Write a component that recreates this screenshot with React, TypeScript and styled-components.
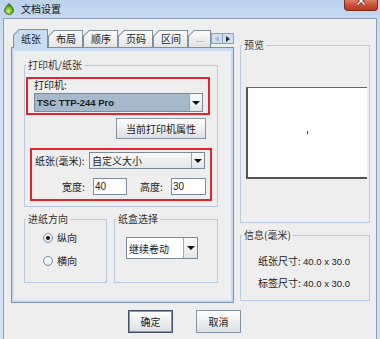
import styled, { createGlobalStyle } from 'styled-components'

const GlobalStyle = createGlobalStyle`
  html, body {
    margin: 0;
    padding: 0;
  }
  body {
    width: 380px;
    height: 339px;
    overflow: hidden;
    font-family: "Liberation Sans", "Noto Sans CJK SC", sans-serif;
    font-size: 10px;
    color: #1e1e1e;
    background: #eeeeee;
  }
  * {
    box-sizing: border-box;
  }
`

const cjk = `"Noto Sans CJK SC", "Liberation Sans", sans-serif`

const Window = styled.div`
  width: 380px;
  height: 339px;
  display: flex;
  flex-direction: column;
  overflow: hidden;
  background: linear-gradient(180deg, #bcd3ec 0%, #cfe0f2 12%, #d3e2f3 100%);
`

const TitleBar = styled.div`
  flex: none;
  height: 18px;
  display: flex;
  align-items: flex-start;
`

const AppIcon = styled.svg`
  flex: none;
  margin: 3px 0 0 4px;
`

const TitleText = styled.span`
  margin: 3px 0 0 7px;
  font-family: ${cjk};
  font-size: 10px;
  line-height: 11px;
  color: #111;
`

const CloseButton = styled.div`
  margin-left: auto;
  margin-right: 2px;
  width: 34px;
  height: 11px;
  border: 1px solid #7d2a1f;
  border-top: none;
  border-radius: 0 0 4px 4px;
  background: linear-gradient(180deg, #dc7f68 0%, #c94d35 55%, #b63c25 100%);
  display: flex;
  justify-content: center;
  overflow: hidden;

  svg {
    margin-top: -4px;
  }
`

const Client = styled.div`
  flex: 1;
  margin: 0 3px;
  border: 1px solid #8d9cb0;
  border-bottom: none;
  background: #eeeeee;
  display: flex;
  flex-direction: column;
`

const MainRow = styled.div`
  display: flex;
  align-items: flex-start;
  padding-left: 7px;
`

const TabPane = styled.div`
  width: 223px;
  margin-top: 10px;
  display: flex;
  flex-direction: column;
`

const TabStrip = styled.div`
  position: relative;
  z-index: 1;
  height: 19px;
  margin-bottom: -1px;
  padding-left: 2px;
  display: flex;
  align-items: flex-end;
`

const Tab = styled.div<{ $selected?: boolean }>`
  flex: none;
  height: ${p => (p.$selected ? 19 : 18)}px;
  padding: 1px 1px ${p => (p.$selected ? 0 : 1)}px 1px;
  background: #7d8fa4;
  clip-path: polygon(6px 0, 100% 0, 100% 100%, 0 100%, 0 6px);
`

const TabFace = styled.div<{ $selected?: boolean; $muted?: boolean }>`
  height: 100%;
  padding: 0 6px 0 7px;
  display: flex;
  align-items: center;
  font-family: ${p => (p.$muted ? `"Liberation Sans", sans-serif` : cjk)};
  font-size: 10px;
  line-height: 1;
  color: ${p => (p.$muted ? '#8a8a8a' : '#1a1a1a')};
  background: ${p =>
    p.$selected ? '#c8ddf2' : 'linear-gradient(180deg, #fdfdfd 0%, #e3e3e3 100%)'};
  clip-path: polygon(5.4px 0, 100% 0, 100% 100%, 0 100%, 0 5.4px);
`

const ScrollArrows = styled.div`
  margin-left: auto;
  margin-bottom: 4px;
  display: flex;
`

const ArrowButton = styled.div`
  width: 12px;
  height: 11px;
  margin-left: -1px;
  border: 1px solid #8ea3ba;
  background: #cde0f3;
  display: flex;
  align-items: center;
  justify-content: center;
`

const LeftTriangle = styled.span`
  width: 0;
  height: 0;
  border-top: 3px solid transparent;
  border-bottom: 3px solid transparent;
  border-right: 4px solid #a9bbcf;
`

const RightTriangle = styled.span`
  width: 0;
  height: 0;
  border-top: 3px solid transparent;
  border-bottom: 3px solid transparent;
  border-left: 4px solid #2a2a2a;
`

const TabPanel = styled.div`
  height: 256px;
  border: 1px solid #7d8fa4;
  background: #c8ddf2;
  padding: 3px 2px 2px 2px;
`

const TabContent = styled.div`
  height: 100%;
  background: #eeeeee;
  padding: 8px 13px 0 10px;
  display: flex;
  flex-direction: column;
`

const Group = styled.fieldset<{ $width: number; $height: number }>`
  margin: 0;
  padding: 0;
  min-width: 0;
  flex: none;
  width: ${p => p.$width}px;
  height: ${p => p.$height}px;
  border: 1px solid #b8cbe0;
`

const Legend = styled.legend`
  margin-left: 1px;
  padding: 0 2px;
  font-family: ${cjk};
  font-size: 10px;
  line-height: 12px;
  color: #333;
`

const Highlight = styled.div<{ $width: number; $height: number }>`
  width: ${p => p.$width}px;
  height: ${p => p.$height}px;
  border: 2px solid #e3262e;
`

const PrinterBox = styled(Highlight)`
  margin: 6px 0 0 1px;
  padding-left: 6px;
`

const PaperBox = styled(Highlight)`
  margin: 9px 0 0 5px;
  padding: 2px 0 0 3px;
`

const FieldLabel = styled.div<{ $width?: number }>`
  flex: none;
  width: ${p => (p.$width ? `${p.$width}px` : 'auto')};
  font-family: ${cjk};
  font-size: 10px;
  line-height: 12px;
  color: #222;
  white-space: nowrap;
`

const Combo = styled.div<{ $tone: 'selected' | 'plain' | 'white'; $width: number; $height: number }>`
  flex: none;
  width: ${p => p.$width}px;
  height: ${p => p.$height}px;
  border: 1px solid #7a8a99;
  display: flex;
  background: ${p =>
    p.$tone === 'selected'
      ? '#a6b8cb'
      : p.$tone === 'plain'
        ? 'linear-gradient(180deg, #fafafa 0%, #e4e6e8 100%)'
        : '#ffffff'};
`

const PrinterCombo = styled(Combo)`
  margin-top: 2px;
`

const TrayCombo = styled(Combo)`
  margin: 12px 0 0 11px;
`

const ComboText = styled.span<{ $latin?: boolean }>`
  flex: 1;
  padding-left: 2px;
  display: flex;
  align-items: center;
  overflow: hidden;
  white-space: nowrap;
  font-family: ${p => (p.$latin ? `"Liberation Sans", sans-serif` : cjk)};
  font-size: ${p => (p.$latin ? 9.5 : 10)}px;
  font-weight: ${p => (p.$latin ? 700 : 400)};
  color: #1a1a1a;
`

const ComboArrow = styled.span<{ $width: number }>`
  flex: none;
  width: ${p => p.$width}px;
  border-left: 1px solid #9aa9b8;
  background: linear-gradient(180deg, #fbfbfb 0%, #e2e5e8 100%);
  display: flex;
  align-items: center;
  justify-content: center;
`

const DownTriangle = styled.span`
  width: 0;
  height: 0;
  border-left: 4px solid transparent;
  border-right: 4px solid transparent;
  border-top: 4px solid #111;
`

const PushButton = styled.button<{ $width: number; $height: number; $default?: boolean }>`
  flex: none;
  display: block;
  width: ${p => p.$width}px;
  height: ${p => p.$height}px;
  padding: 0;
  border: 1px solid ${p => (p.$default ? '#3e5167' : '#8595a7')};
  box-shadow: ${p => (p.$default ? 'inset 0 0 0 1px #8497ab' : 'none')};
  background: linear-gradient(180deg, #ffffff 0%, #eff0f2 45%, #dcdfe3 100%);
  font-family: ${cjk};
  font-size: 10px;
  color: #1a1a1a;
`

const PropertiesButton = styled(PushButton)`
  margin: 3px 11px 0 auto;
`

const PaperRow = styled.div`
  display: flex;
  align-items: center;
`

const SizeRow = styled.div`
  display: flex;
  align-items: center;
  margin-top: 9px;
  padding-left: 27px;
`

const SizeInput = styled.input<{ $width: number }>`
  flex: none;
  width: ${p => p.$width}px;
  height: 17px;
  margin: 0;
  padding: 0 1px;
  border: 1px solid #7f8e9e;
  background: #ffffff;
  font-family: "Liberation Sans", sans-serif;
  font-size: 10px;
  color: #1a1a1a;
  outline: none;
`

const SecondLabel = styled(FieldLabel)`
  margin-left: 13px;
`

const LowerRow = styled.div`
  display: flex;
  gap: 7px;
  margin-top: 6px;
`

const RadioRow = styled.div`
  display: flex;
  align-items: center;
  height: 14px;
  padding-left: 18px;
  margin-top: 6px;

  & + & {
    margin-top: 9px;
  }
`

const RadioDot = styled.span<{ $checked?: boolean }>`
  flex: none;
  width: 10px;
  height: 10px;
  margin-right: 4px;
  border-radius: 50%;
  border: 1px solid #7a8a99;
  background: linear-gradient(180deg, #ffffff 0%, #dfe6ee 100%);
  display: flex;
  align-items: center;
  justify-content: center;

  &::after {
    content: '';
    display: ${p => (p.$checked ? 'block' : 'none')};
    width: 4px;
    height: 4px;
    border-radius: 50%;
    background: #111;
  }
`

const RightColumn = styled.div`
  width: 130px;
  margin: 20px 0 0 6px;
  display: flex;
  flex-direction: column;
`

const PreviewPaper = styled.div`
  width: 121px;
  height: 92px;
  margin: 36px 0 0 5px;
  background: #ffffff;
  border-top: 1px solid #666;
  border-left: 2px solid #555;
  border-bottom: 2px solid #555;
  display: flex;
  align-items: center;
  justify-content: center;
`

const CenterTick = styled.span`
  width: 1px;
  height: 3px;
  background: #444;
`

const InfoGroup = styled(Group)`
  margin-top: 6px;
`

const InfoRow = styled.div`
  display: flex;
  align-items: baseline;
  padding-left: 17px;
  margin-top: 14px;
  line-height: 12px;

  & + & {
    margin-top: 9px;
  }
`

const InfoValue = styled.span`
  font-family: "Liberation Sans", sans-serif;
  font-size: 9.5px;
  color: #222;
`

const ButtonRow = styled.div`
  display: flex;
  justify-content: center;
  gap: 23px;
  margin-top: 7px;
  padding-right: 11px;
`

const tabs = ['纸张', '布局', '顺序', '页码', '区间']

const App = () => {
  return (
    <>
      <GlobalStyle />
      <Window>
        <TitleBar>
          <AppIcon width="10" height="12" viewBox="0 0 10 12">
            <defs>
              <radialGradient id="drop" cx="0.45" cy="0.7" r="0.6">
                <stop offset="0" stopColor="#e6f58a" />
                <stop offset="0.5" stopColor="#7cc427" />
                <stop offset="1" stopColor="#2f8a16" />
              </radialGradient>
            </defs>
            <path
              d="M5 0.5 C7.5 3 9.5 5.5 9.5 7.5 A4.5 4 0 0 1 0.5 7.5 C0.5 5.5 2.5 3 5 0.5 Z"
              fill="url(#drop)"
              stroke="#2b6a12"
              strokeWidth="0.8"
            />
          </AppIcon>
          <TitleText>文档设置</TitleText>
          <CloseButton>
            <svg width="10" height="10" viewBox="0 0 10 10">
              <path d="M1.5 1.5 L8.5 8.5 M8.5 1.5 L1.5 8.5" stroke="#5a1a10" strokeWidth="3" />
              <path d="M1.5 1.5 L8.5 8.5 M8.5 1.5 L1.5 8.5" stroke="#ffffff" strokeWidth="1.6" />
            </svg>
          </CloseButton>
        </TitleBar>
        <Client>
          <MainRow>
            <TabPane>
              <TabStrip>
                {tabs.map((t, i) => (
                  <Tab key={t} $selected={i === 0}>
                    <TabFace $selected={i === 0}>{t}</TabFace>
                  </Tab>
                ))}
                <Tab>
                  <TabFace $muted>...</TabFace>
                </Tab>
                <ScrollArrows>
                  <ArrowButton>
                    <LeftTriangle />
                  </ArrowButton>
                  <ArrowButton>
                    <RightTriangle />
                  </ArrowButton>
                </ScrollArrows>
              </TabStrip>
              <TabPanel>
                <TabContent>
                  <Group $width={194} $height={148}>
                    <Legend>打印机/纸张</Legend>
                    <PrinterBox $width={184} $height={38}>
                      <FieldLabel>打印机:</FieldLabel>
                      <PrinterCombo $tone="selected" $width={169} $height={19}>
                        <ComboText $latin>TSC TTP-244 Pro</ComboText>
                        <ComboArrow $width={13}>
                          <DownTriangle />
                        </ComboArrow>
                      </PrinterCombo>
                    </PrinterBox>
                    <PropertiesButton $width={90} $height={21}>
                      当前打印机属性
                    </PropertiesButton>
                    <PaperBox $width={182} $height={53}>
                      <PaperRow>
                        <FieldLabel $width={54}>纸张(毫米):</FieldLabel>
                        <Combo $tone="plain" $width={116} $height={17}>
                          <ComboText>自定义大小</ComboText>
                          <ComboArrow $width={13}>
                            <DownTriangle />
                          </ComboArrow>
                        </Combo>
                      </PaperRow>
                      <SizeRow>
                        <FieldLabel $width={31}>宽度:</FieldLabel>
                        <SizeInput $width={34} value="40" readOnly />
                        <SecondLabel $width={31}>高度:</SecondLabel>
                        <SizeInput $width={35} value="30" readOnly />
                      </SizeRow>
                    </PaperBox>
                  </Group>
                  <LowerRow>
                    <Group $width={83} $height={70}>
                      <Legend>进纸方向</Legend>
                      <RadioRow>
                        <RadioDot $checked />
                        <FieldLabel>纵向</FieldLabel>
                      </RadioRow>
                      <RadioRow>
                        <RadioDot />
                        <FieldLabel>横向</FieldLabel>
                      </RadioRow>
                    </Group>
                    <Group $width={104} $height={70}>
                      <Legend>纸盒选择</Legend>
                      <TrayCombo $tone="white" $width={72} $height={22}>
                        <ComboText>继续卷动</ComboText>
                        <ComboArrow $width={14}>
                          <DownTriangle />
                        </ComboArrow>
                      </TrayCombo>
                    </Group>
                  </LowerRow>
                </TabContent>
              </TabPanel>
            </TabPane>
            <RightColumn>
              <Group $width={130} $height={184}>
                <Legend>预览</Legend>
                <PreviewPaper>
                  <CenterTick />
                </PreviewPaper>
              </Group>
              <InfoGroup $width={130} $height={72}>
                <Legend>信息(毫米)</Legend>
                <InfoRow>
                  <FieldLabel>纸张尺寸:&nbsp;</FieldLabel>
                  <InfoValue>40.0 x 30.0</InfoValue>
                </InfoRow>
                <InfoRow>
                  <FieldLabel>标签尺寸:&nbsp;</FieldLabel>
                  <InfoValue>40.0 x 30.0</InfoValue>
                </InfoRow>
              </InfoGroup>
            </RightColumn>
          </MainRow>
          <ButtonRow>
            <PushButton $width={45} $height={23} $default>
              确定
            </PushButton>
            <PushButton $width={45} $height={23}>
              取消
            </PushButton>
          </ButtonRow>
        </Client>
      </Window>
    </>
  )
}

export default App
